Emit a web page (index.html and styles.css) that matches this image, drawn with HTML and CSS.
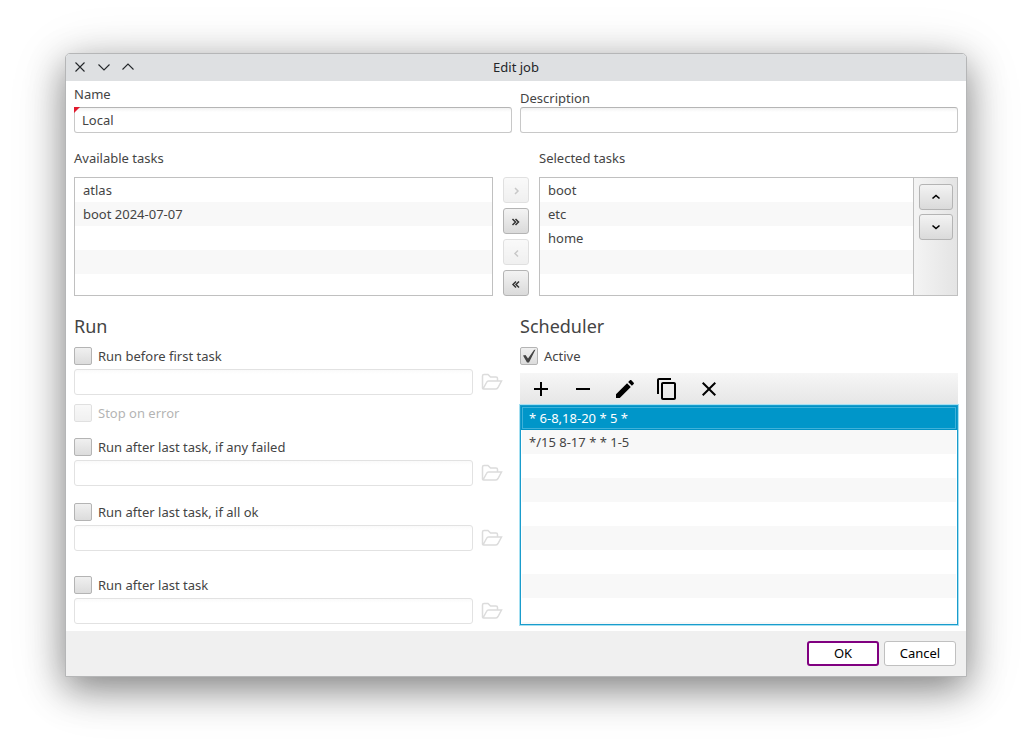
FILE: index.html
```html
<!DOCTYPE html>
<html lang="en">
<head>
  <meta charset="UTF-8">
  <meta name="viewport" content="width=device-width, initial-scale=1.0">
  <title>Edit job</title>
  <link rel="stylesheet" href="styles.css">
</head>
<body>
  <svg class="defs">
    <symbol id="folder" viewBox="0 0 22 18">
      <path d="M1.500 15.500V3Q1.500 1.500 3 1.500H7L9.500 4H15Q16.500 4 16.500 5.500V7.500M2 16L5.500 9.500Q6.200 8 7.500 8H20.500L17 14.500Q16 16 14.500 16H2.500Q1.500 16 1.500 15"/>
    </symbol>
  </svg>
  <div class="window">
    <div class="titlebar">
      <div class="controls">
        <svg width="12" height="12" viewBox="0 0 12 12"><path d="M1.500 1.500L10.500 10.500M10.500 1.500L1.500 10.500"/></svg>
        <svg width="12" height="12" viewBox="0 0 12 12"><path d="M.5 3.500L6 9L11.500 3.500"/></svg>
        <svg width="12" height="12" viewBox="0 0 12 12"><path d="M.5 8.500L6 3L11.500 8.500"/></svg>
      </div>
      <div class="title">Edit job</div>
    </div>

    <div class="content">
      <div class="fields">
        <div class="field">
          <label class="name-label" for="name">Name</label>
          <div class="required"><input type="text" class="input" id="name" value="Local"></div>
        </div>
        <div class="field">
          <label for="description">Description</label>
          <input type="text" class="input" id="description">
        </div>
      </div>

      <div class="tasks">
        <div class="task-column">
          <div class="task-label">Available tasks</div>
          <div class="list">
            <div class="rows">
              <div class="row">atlas</div>
              <div class="row">boot 2024-07-07</div>
            </div>
          </div>
        </div>
        <div class="move">
          <button class="button" disabled><svg width="12" height="12"><path d="M5 4L8 7L5 10"/></svg></button>
          <button class="button"><svg width="12" height="12"><path d="M2.500 4L5.500 7L2.500 10M5.500 4L8.500 7L5.500 10"/></svg></button>
          <button class="button" disabled><svg width="12" height="12"><path d="M8 4.500L5 7.500L8 10.500"/></svg></button>
          <button class="button"><svg width="12" height="12"><path d="M6 4.500L3 7.500L6 10.500M9 4.500L6 7.500L9 10.500"/></svg></button>
        </div>
        <div class="task-column">
          <div class="task-label">Selected tasks</div>
          <div class="list">
            <div class="rows">
              <div class="row">boot</div>
              <div class="row">etc</div>
              <div class="row">home</div>
            </div>
            <div class="order">
              <button class="button wide"><svg width="12" height="12"><path d="M2.500 7.500L6 4.500L9.500 7.500"/></svg></button>
              <button class="button wide"><svg width="12" height="12"><path d="M2.500 4.500L6 7.500L9.500 4.500"/></svg></button>
            </div>
          </div>
        </div>
      </div>

      <div class="bottom">
        <div class="run">
          <h2>Run</h2>
          <div class="check"><span class="box"></span>Run before first task</div>
          <div class="file"><input type="text" class="input" disabled><svg class="folder"><use href="#folder"/></svg></div>
          <div class="check stop disabled"><span class="box"></span>Stop on error</div>
          <div class="check failed"><span class="box"></span>Run after last task, if any failed</div>
          <div class="file"><input type="text" class="input" disabled><svg class="folder"><use href="#folder"/></svg></div>
          <div class="check ok"><span class="box"></span>Run after last task, if all ok</div>
          <div class="file"><input type="text" class="input" disabled><svg class="folder"><use href="#folder"/></svg></div>
          <div class="check always"><span class="box"></span>Run after last task</div>
          <div class="file"><input type="text" class="input" disabled><svg class="folder"><use href="#folder"/></svg></div>
        </div>

        <div class="scheduler">
          <h2>Scheduler</h2>
          <div class="check"><span class="box"><svg width="16" height="16"><path d="M2 7.500L4.500 7L7 10.500L13 2L14.500 1.500L8 14.500H6Z"/></svg></span>Active</div>
          <div class="toolbar">
            <svg viewBox="0 0 24 24"><path d="M11 5h2v6h6v2h-6v6h-2v-6H5v-2h6z"/></svg>
            <svg viewBox="0 0 24 24"><path d="M5 11h14v2H5z"/></svg>
            <svg viewBox="0 0 24 24"><path d="M3 17.250V21h3.750L17.810 9.940l-3.750-3.750L3 17.250zM20.710 7.040c.39-.39.39-1.020 0-1.410l-2.340-2.340c-.39-.39-1.020-.39-1.410 0l-1.830 1.830 3.750 3.750 1.830-1.830z"/></svg>
            <svg viewBox="0 0 24 24"><path d="M16 1H4c-1.100 0-2 .9-2 2v14h2V3h12V1zm3 4H8c-1.100 0-2 .9-2 2v14c0 1.100.9 2 2 2h11c1.100 0 2-.9 2-2V7c0-1.100-.9-2-2-2zm0 16H8V7h11v14z"/></svg>
            <svg viewBox="0 0 24 24"><path d="M19 6.410L17.590 5 12 10.590 6.410 5 5 6.410 10.590 12 5 17.590 6.410 19 12 13.410 17.590 19 19 17.590 13.410 12z"/></svg>
          </div>
          <div class="schedule">
            <div class="row selected">* 6-8,18-20 * 5 *</div>
            <div class="row">*/15 8-17 * * 1-5</div>
          </div>
        </div>
      </div>
    </div>

    <div class="footer">
      <button class="dialog-button primary">OK</button>
      <button class="dialog-button">Cancel</button>
    </div>
  </div>
</body>
</html>
```
FILE: styles.css
```css
* {
  box-sizing: border-box;
}
body {
  margin: 0;
  height: 755px;
  padding: 53px 66px 0 65px;
  overflow: hidden;
  background: #fff;
  color: #444;
  font-family: "Noto Sans", sans-serif;
  font-size: 13px;
  line-height: 18px;
}
svg {
  display: block;
  flex: none;
}
.defs {
  display: none;
}
.window {
  height: 624px;
  border: 1px solid #b5b6b7;
  border-radius: 5px 5px 0 0;
  background: #fff;
  box-shadow: 0 12px 36px rgba(0, 0, 0, 0.42), 0 8px 60px rgba(0, 0, 0, 0.14);
}
.titlebar {
  display: grid;
  grid-template-columns: 1fr auto 1fr;
  align-items: center;
  height: 27px;
  padding-bottom: 2px;
  background: #dee0e2;
  border-radius: 4px 4px 0 0;
  color: #232629;
}
.controls {
  display: flex;
  gap: 12px;
  padding-left: 8px;
}
.controls svg {
  fill: none;
  stroke: #232629;
  stroke-width: 1.1;
}
.content {
  height: 550px;
  padding: 0 8px;
}
.fields {
  display: grid;
  grid-template-columns: 1fr 1fr;
  gap: 8px;
}
.field label {
  display: block;
  height: 26px;
  padding-top: 8px;
}
.field .name-label {
  padding-top: 4px;
}
.input {
  display: block;
  width: 100%;
  height: 26px;
  padding: 0 7px;
  border: 1px solid #c8c8c8;
  border-top-color: #b5b5b5;
  border-radius: 3px;
  background: linear-gradient(#f2f2f2, #fff 4px);
  color: #444;
  font: inherit;
}
.input:disabled {
  border-color: #e2e2e2;
  background: linear-gradient(#fafafa, #fff 4px);
}
.required {
  position: relative;
}
.required::before {
  content: "";
  position: absolute;
  left: 0;
  top: 0;
  border-top: 6px solid #e1192d;
  border-right: 6px solid transparent;
}
.tasks {
  display: flex;
  gap: 10px;
  margin-top: 16px;
}
.task-column {
  flex: 1;
}
.task-label {
  height: 28px;
}
.list {
  display: flex;
  height: 119px;
  border: 1px solid #c0c0c0;
}
.rows {
  flex: 1;
  background: repeating-linear-gradient(#fff 0 24px, #f8f8f8 24px 48px);
}
.row {
  height: 24px;
  padding-left: 8px;
  line-height: 24px;
}
.move {
  display: flex;
  flex-direction: column;
  gap: 5px;
  padding-top: 28px;
}
.button {
  display: flex;
  align-items: center;
  justify-content: center;
  width: 26px;
  height: 26px;
  padding: 0;
  border: 1px solid #b4b4b4;
  border-radius: 3px;
  background: linear-gradient(#f3f3f3, #dadada);
}
.button svg {
  fill: none;
  stroke: #333;
  stroke-width: 1.5;
}
.button:disabled {
  opacity: 0.4;
}
.button:disabled svg {
  stroke: #777;
}
.order {
  display: flex;
  flex-direction: column;
  gap: 4px;
  width: 44px;
  padding: 6px 5px;
  border-left: 1px solid #c0c0c0;
  background: linear-gradient(to right, #f4f4f4, #e4e4e4);
}
.button.wide {
  width: 34px;
}
.wide svg {
  stroke: #000;
  stroke-width: 1.6;
}
.bottom {
  display: grid;
  grid-template-columns: 1fr 438px;
  gap: 16px;
  margin-top: 18px;
}
h2 {
  height: 24px;
  margin: 0 0 9px;
  font-size: 18px;
  font-weight: normal;
  line-height: 24px;
}
.check {
  display: flex;
  align-items: center;
  gap: 6px;
  height: 18px;
}
.box {
  width: 18px;
  height: 18px;
  border: 1px solid #b4b4b4;
  border-radius: 2px;
  background: linear-gradient(#f0f0f0, #dcdcdc);
}
.box path {
  fill: #444;
}
.disabled {
  opacity: 0.4;
}
.file {
  display: flex;
  gap: 8px;
  margin-top: 4px;
}
.file .input {
  width: 399px;
}
.folder {
  width: 22px;
  height: 18px;
  margin-top: 4px;
  fill: none;
  stroke: #dcdcdc;
  stroke-width: 1.5;
}
.stop {
  margin-top: 9px;
}
.failed {
  margin-top: 16px;
}
.ok {
  margin-top: 17px;
}
.always {
  margin-top: 25px;
}
.toolbar {
  display: flex;
  align-items: center;
  gap: 18px;
  height: 31px;
  margin-top: 8px;
  padding-left: 9px;
  background: linear-gradient(#f6f6f6, #e6e6e6);
}
.toolbar svg {
  width: 24px;
  height: 24px;
}
.schedule {
  height: 220px;
  margin: 1px 0 0;
  padding: 0 1px;
  border: 1px solid #1a9ccc;
  box-shadow: 0 0 0 1px #a5e0f2;
  background: repeating-linear-gradient(#fff 0 24px, #f8f8f8 24px 48px) content-box;
}
.schedule .row {
  padding-left: 7px;
}
.selected {
  margin: 0 -1px;
  background: #0096c9;
  color: #fff;
  box-shadow: inset 0 0 0 1px #0092c5, inset 0 0 0 2px #3fb1d9;
}
.schedule .selected {
  padding-left: 8px;
}
.footer {
  display: flex;
  justify-content: flex-end;
  gap: 5px;
  height: 45px;
  padding: 10px 10px 0;
  background: #f0f0f0;
}
.dialog-button {
  width: 72px;
  height: 25px;
  padding: 0 0 1px;
  border: 1px solid #c0c0c0;
  border-radius: 3px;
  background: #fff;
  color: #000;
  font: inherit;
}
.primary {
  border: 2px solid #800080;
}
```
